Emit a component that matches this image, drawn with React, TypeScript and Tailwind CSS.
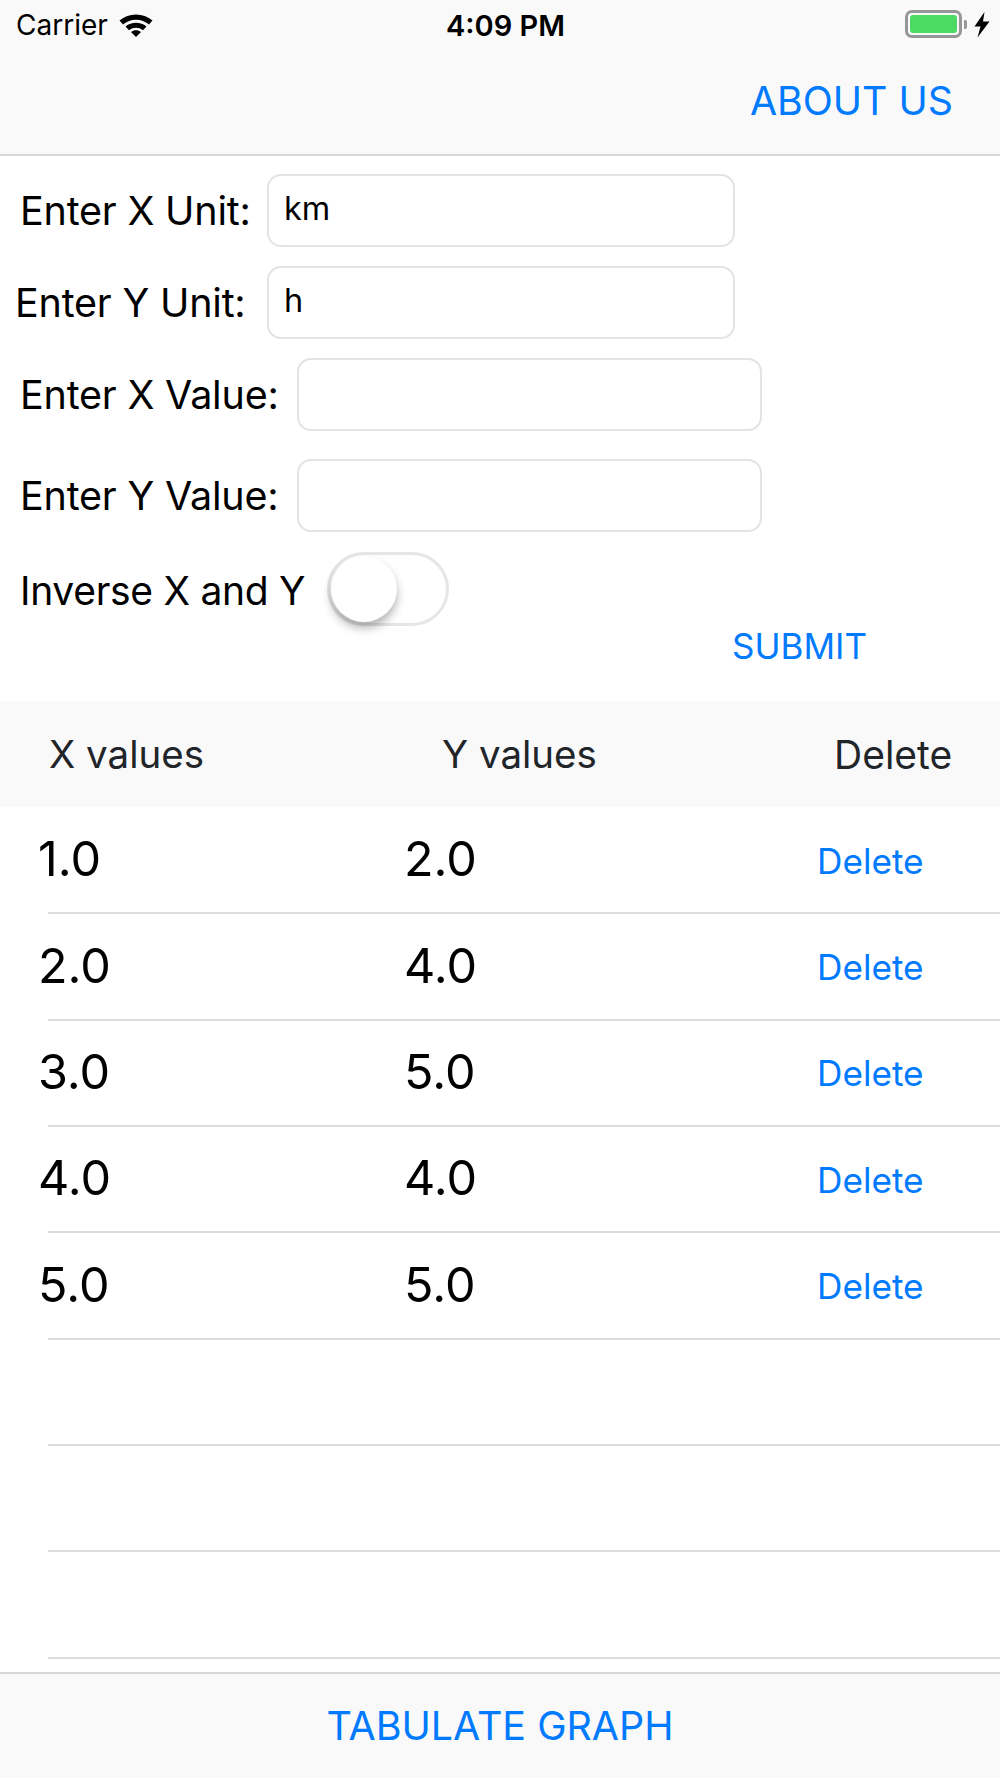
const BLUE = "text-[#007aff]";

function FormRow({ label, value, labelX, inputW, top, height }: { label: string; value?: string; labelX: string; inputW: string; top: string; height: string }) {
  return (
    <div className={`flex items-center ${height} ${top}`}>
      <span className={`text-[39.5px] tracking-[-0.2px] leading-none text-black whitespace-nowrap pt-[2px] ${labelX}`}>{label}</span>
      <div className={`${height} rounded-[14px] border-2 border-[#e4e4e4] flex items-center pl-[15px] pb-[2px] text-[32.5px] text-black ${inputW}`}>
        {value}
      </div>
    </div>
  );
}

function Row({ x, y }: { x?: string; y?: string }) {
  return (
    <div className="h-[106.33px] relative shrink-0 flex items-center">
      {x && (
        <>
          <span className="ml-[38px] w-[366px] pb-[3px] text-[48.5px] text-black leading-none">{x}</span>
          <span className="w-[413px] pb-[3px] text-[48.5px] text-black leading-none">{y}</span>
          <span className={`text-[35.2px] leading-none ${BLUE}`}>Delete</span>
        </>
      )}
      <div className="absolute left-[48px] right-0 bottom-0 h-[2px] bg-[#dcdcdc]" />
    </div>
  );
}

export default function App() {
  return (
    <div className="w-[1000px] h-[1778px] bg-white flex flex-col overflow-hidden font-['Inter','Liberation_Sans',sans-serif]">
      <header className="h-[156px] bg-[#f9f9f9] border-b-2 border-[#d6d6d6] shrink-0">
        <div className="h-[50px] flex items-center relative">
          <span className="ml-[16px] text-[28px] text-black leading-none">Carrier</span>
          <svg className="ml-[11px] -mt-[2px]" width="34" height="25" viewBox="0 0 34 25">
            <path d="M0.5 8.5 C9.5 0.5 24.5 0.5 33.5 8.5 L30 12.5 C22.5 6 11.5 6 4 12.5 Z" fill="#000" />
            <path d="M6.5 14.5 C12.5 9.5 21.5 9.5 27.5 14.5 L24 18.3 C20 15 14 15 10 18.3 Z" fill="#000" />
            <path d="M12 20 C15 17.6 19 17.6 22 20 L17 25 Z" fill="#000" />
          </svg>
          <span className="absolute left-[446px] text-[29px] font-semibold text-black leading-none">4:09 PM</span>
          <div className="absolute left-[905px] top-[10px] w-[57px] h-[28px] rounded-[7px] border-[3px] border-[#969696] p-[2px]">
            <div className="w-full h-full rounded-[3px] bg-[#4cd964]" />
          </div>
          <div className="absolute left-[964px] top-[20px] w-[3px] h-[9px] rounded-r-[2px] bg-[#969696]" />
          <svg className="absolute left-[974px] top-[12px]" width="16" height="26" viewBox="0 0 16 26">
            <path d="M10.5 0 L0.5 14.5 H6.5 L3.5 25.5 L15.5 9.5 H9 Z" fill="#000" />
          </svg>
        </div>
        <div className="flex justify-end items-center h-[103px] pr-[47px] pt-[1px] -mt-[1px]">
          <span className={`text-[39.3px] leading-none ${BLUE}`}>ABOUT US</span>
        </div>
      </header>

      <section className="h-[545px] shrink-0">
        <div className="pt-[18px]">
          <FormRow label="Enter X Unit:" value="km" labelX="ml-[20px] w-[247px]" inputW="w-[468px]" top="" height="h-[73px]" />
          <FormRow label="Enter Y Unit:" value="h" labelX="ml-[15px] w-[252px]" inputW="w-[468px]" top="mt-[19px]" height="h-[73px]" />
          <FormRow label="Enter X Value:" labelX="ml-[20px] w-[277px]" inputW="w-[465px]" top="mt-[19px]" height="h-[73px]" />
          <FormRow label="Enter Y Value:" labelX="ml-[20px] w-[277px]" inputW="w-[465px]" top="mt-[28px]" height="h-[73px]" />
          <div className="flex items-center h-[74px] mt-[20px]">
            <span className="ml-[20px] w-[308px] text-[39px] tracking-[-0.3px] leading-none text-black whitespace-nowrap pt-[2px]">Inverse X and Y</span>
            <div className="relative w-[122px] h-[74px] rounded-full border-[3px] border-[#e6e6e6] -ml-[1px]">
              <div className="absolute left-[1px] top-[1px] w-[66px] h-[66px] rounded-full bg-white shadow-[0_6px_10px_rgba(0,0,0,0.3)]" />
            </div>
          </div>
          <div className="flex justify-end pr-[133px] mt-[3px]">
            <span className={`text-[35px] leading-none ${BLUE}`}>SUBMIT</span>
          </div>
        </div>
      </section>

      <div className="h-[106px] bg-[#f9f9f9] shrink-0 flex items-center text-[#212529] text-[38.5px] leading-none">
        <span className="ml-[49px] w-[393px]">X values</span>
        <span className="w-[392px]">Y values</span>
        <span className="text-[39px]">Delete</span>
      </div>

      <main className="flex-1 min-h-0 overflow-hidden flex flex-col pt-[1px]">
        <Row x="1.0" y="2.0" />
        <Row x="2.0" y="4.0" />
        <Row x="3.0" y="5.0" />
        <Row x="4.0" y="4.0" />
        <Row x="5.0" y="5.0" />
        <Row />
        <Row />
        <Row />
        <Row />
      </main>

      <footer className="h-[106px] shrink-0 bg-[#f9f9f9] border-t-2 border-[#d6d6d6] flex items-center justify-center pt-[2px]">
        <span className={`text-[39.4px] leading-none ${BLUE}`}>TABULATE GRAPH</span>
      </footer>
    </div>
  );
}
